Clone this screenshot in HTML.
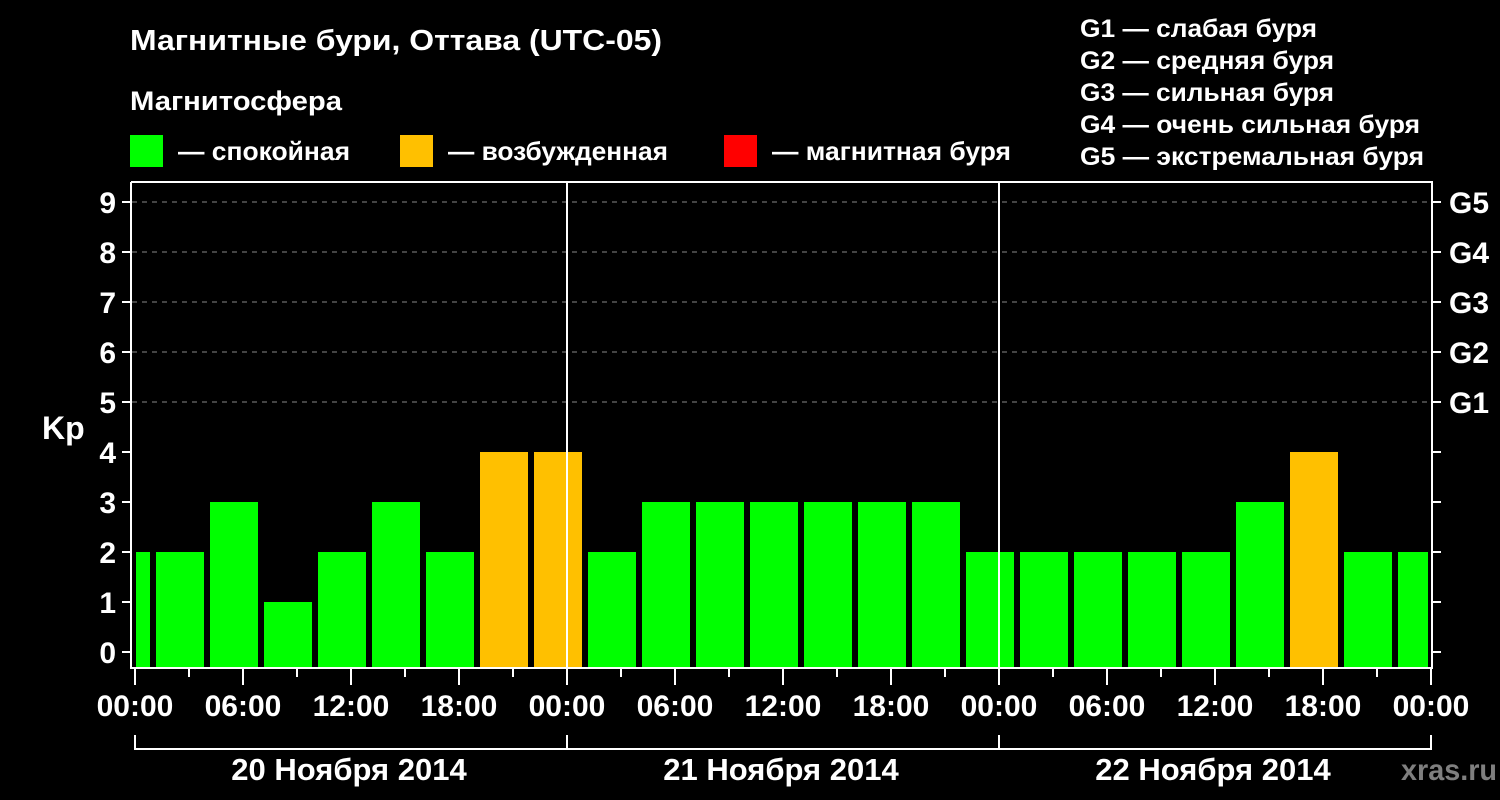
<!DOCTYPE html>
<html><head><meta charset="utf-8"><style>
html,body{margin:0;padding:0;background:#000;}
svg{display:block;}
text{font-family:"Liberation Sans",Arial,sans-serif;font-weight:bold;fill:#fff;}
</style></head><body>
<svg width="1500" height="800" viewBox="0 0 1500 800" xmlns="http://www.w3.org/2000/svg">
<rect width="1500" height="800" fill="#000"/>
<text x="130" y="50" font-size="29" textLength="532" lengthAdjust="spacingAndGlyphs">Магнитные бури, Оттава (UTC-05)</text>
<text x="130" y="110" font-size="27" textLength="212" lengthAdjust="spacingAndGlyphs">Магнитосфера</text>
<rect x="130" y="135" width="33" height="32" fill="#00ff00"/>
<text x="178" y="160" font-size="26" textLength="172" lengthAdjust="spacingAndGlyphs">— спокойная</text>
<rect x="400" y="135" width="33" height="32" fill="#ffc000"/>
<text x="448" y="160" font-size="26" textLength="220" lengthAdjust="spacingAndGlyphs">— возбужденная</text>
<rect x="724" y="135" width="33" height="32" fill="#ff0000"/>
<text x="772" y="160" font-size="26" textLength="239" lengthAdjust="spacingAndGlyphs">— магнитная буря</text>
<g font-size="25">
<text x="1080" y="37" textLength="237" lengthAdjust="spacingAndGlyphs">G1 — слабая буря</text>
<text x="1080" y="69" textLength="254" lengthAdjust="spacingAndGlyphs">G2 — средняя буря</text>
<text x="1080" y="101" textLength="254" lengthAdjust="spacingAndGlyphs">G3 — сильная буря</text>
<text x="1080" y="133" textLength="340" lengthAdjust="spacingAndGlyphs">G4 — очень сильная буря</text>
<text x="1080" y="165" textLength="344" lengthAdjust="spacingAndGlyphs">G5 — экстремальная буря</text>
</g>
<g stroke="#888" stroke-width="1" stroke-dasharray="5,5">
<line x1="132" y1="402" x2="1432" y2="402"/>
<line x1="132" y1="352" x2="1432" y2="352"/>
<line x1="132" y1="302" x2="1432" y2="302"/>
<line x1="132" y1="252" x2="1432" y2="252"/>
<line x1="132" y1="202" x2="1432" y2="202"/>
</g>
<g fill="#00ff00">
<rect x="136" y="552" width="14" height="115"/>
<rect x="156" y="552" width="48" height="115"/>
<rect x="210" y="502" width="48" height="165"/>
<rect x="264" y="602" width="48" height="65"/>
<rect x="318" y="552" width="48" height="115"/>
<rect x="372" y="502" width="48" height="165"/>
<rect x="426" y="552" width="48" height="115"/>
<rect x="480" y="452" width="48" height="215" fill="#ffc000"/>
<rect x="534" y="452" width="48" height="215" fill="#ffc000"/>
<rect x="588" y="552" width="48" height="115"/>
<rect x="642" y="502" width="48" height="165"/>
<rect x="696" y="502" width="48" height="165"/>
<rect x="750" y="502" width="48" height="165"/>
<rect x="804" y="502" width="48" height="165"/>
<rect x="858" y="502" width="48" height="165"/>
<rect x="912" y="502" width="48" height="165"/>
<rect x="966" y="552" width="48" height="115"/>
<rect x="1020" y="552" width="48" height="115"/>
<rect x="1074" y="552" width="48" height="115"/>
<rect x="1128" y="552" width="48" height="115"/>
<rect x="1182" y="552" width="48" height="115"/>
<rect x="1236" y="502" width="48" height="165"/>
<rect x="1290" y="452" width="48" height="215" fill="#ffc000"/>
<rect x="1344" y="552" width="48" height="115"/>
<rect x="1398" y="552" width="30" height="115"/>
</g>
<g stroke="#fff" stroke-width="2" fill="none">
<polyline points="131,182 1432,182 1432,668 131,668 131,182"/>
<line x1="567" y1="182" x2="567" y2="668"/>
<line x1="999" y1="182" x2="999" y2="668"/>
<polyline points="135,735 135,749 1431,749 1431,735"/>
<line x1="567" y1="735" x2="567" y2="749"/>
<line x1="999" y1="735" x2="999" y2="749"/>
</g>
<g stroke="#fff" stroke-width="2">
<line x1="122" y1="202" x2="131" y2="202"/><line x1="1432" y1="202" x2="1441" y2="202"/>
<line x1="122" y1="252" x2="131" y2="252"/><line x1="1432" y1="252" x2="1441" y2="252"/>
<line x1="122" y1="302" x2="131" y2="302"/><line x1="1432" y1="302" x2="1441" y2="302"/>
<line x1="122" y1="352" x2="131" y2="352"/><line x1="1432" y1="352" x2="1441" y2="352"/>
<line x1="122" y1="402" x2="131" y2="402"/><line x1="1432" y1="402" x2="1441" y2="402"/>
<line x1="122" y1="452" x2="131" y2="452"/><line x1="1432" y1="452" x2="1441" y2="452"/>
<line x1="122" y1="502" x2="131" y2="502"/><line x1="1432" y1="502" x2="1441" y2="502"/>
<line x1="122" y1="552" x2="131" y2="552"/><line x1="1432" y1="552" x2="1441" y2="552"/>
<line x1="122" y1="602" x2="131" y2="602"/><line x1="1432" y1="602" x2="1441" y2="602"/>
<line x1="122" y1="652" x2="131" y2="652"/><line x1="1432" y1="652" x2="1441" y2="652"/>
<line x1="135" y1="668" x2="135" y2="685"/><line x1="189" y1="668" x2="189" y2="677"/>
<line x1="243" y1="668" x2="243" y2="685"/><line x1="297" y1="668" x2="297" y2="677"/>
<line x1="351" y1="668" x2="351" y2="685"/><line x1="405" y1="668" x2="405" y2="677"/>
<line x1="459" y1="668" x2="459" y2="685"/><line x1="513" y1="668" x2="513" y2="677"/>
<line x1="567" y1="668" x2="567" y2="685"/><line x1="621" y1="668" x2="621" y2="677"/>
<line x1="675" y1="668" x2="675" y2="685"/><line x1="729" y1="668" x2="729" y2="677"/>
<line x1="783" y1="668" x2="783" y2="685"/><line x1="837" y1="668" x2="837" y2="677"/>
<line x1="891" y1="668" x2="891" y2="685"/><line x1="945" y1="668" x2="945" y2="677"/>
<line x1="999" y1="668" x2="999" y2="685"/><line x1="1053" y1="668" x2="1053" y2="677"/>
<line x1="1107" y1="668" x2="1107" y2="685"/><line x1="1161" y1="668" x2="1161" y2="677"/>
<line x1="1215" y1="668" x2="1215" y2="685"/><line x1="1269" y1="668" x2="1269" y2="677"/>
<line x1="1323" y1="668" x2="1323" y2="685"/><line x1="1377" y1="668" x2="1377" y2="677"/>
<line x1="1431" y1="668" x2="1431" y2="685"/>
</g>
<g font-size="30" text-anchor="end">
<text x="116" y="213">9</text><text x="116" y="263">8</text><text x="116" y="313">7</text>
<text x="116" y="363">6</text><text x="116" y="413">5</text><text x="116" y="463">4</text>
<text x="116" y="513">3</text><text x="116" y="563">2</text><text x="116" y="613">1</text>
<text x="116" y="663">0</text>
</g>
<text x="42" y="439" font-size="32">Kp</text>
<g font-size="30">
<text x="1449" y="213">G5</text><text x="1449" y="263">G4</text><text x="1449" y="313">G3</text>
<text x="1449" y="363">G2</text><text x="1449" y="413">G1</text>
</g>
<g font-size="30" text-anchor="middle">
<text x="135" y="716">00:00</text><text x="243" y="716">06:00</text><text x="351" y="716">12:00</text>
<text x="459" y="716">18:00</text><text x="567" y="716">00:00</text><text x="675" y="716">06:00</text>
<text x="783" y="716">12:00</text><text x="891" y="716">18:00</text><text x="999" y="716">00:00</text>
<text x="1107" y="716">06:00</text><text x="1215" y="716">12:00</text><text x="1323" y="716">18:00</text>
<text x="1431" y="716">00:00</text>
</g>
<g font-size="31" text-anchor="middle">
<text x="349" y="780">20 Ноября 2014</text>
<text x="781" y="780">21 Ноября 2014</text>
<text x="1213" y="780">22 Ноября 2014</text>
</g>
<text x="1401" y="780" font-size="30" style="fill:#7f7f7f" textLength="96" lengthAdjust="spacingAndGlyphs">xras.ru</text>
</svg>
</body></html>
